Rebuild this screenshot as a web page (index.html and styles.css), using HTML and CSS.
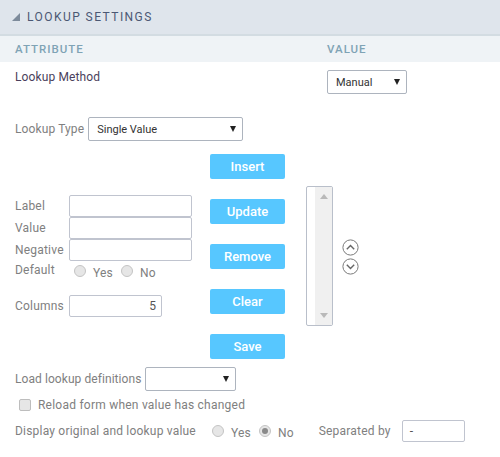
FILE: index.html
```html
<!DOCTYPE html>
<html lang="en">
<head>
<meta charset="utf-8">
<title>Lookup Settings</title>
<link rel="stylesheet" href="styles.css">
</head>
<body>
<header class="title-bar">
  <svg class="corner" width="8" height="8" viewBox="0 0 8 8"><path d="M8 0V8H0Z" fill="#7d8b9b"/></svg>
  <span class="title-text">LOOKUP SETTINGS</span>
</header>
<div class="head-row">
  <span class="head-attr">ATTRIBUTE</span>
  <span class="head-val">VALUE</span>
</div>
<div class="method-row">
  <span class="method-label">Lookup Method</span>
  <div class="select select-method"><span>Manual</span><i class="caret"></i></div>
</div>
<div class="type-row">
  <span class="label">Lookup Type</span>
  <div class="select select-type"><span>Single Value</span><i class="caret"></i></div>
</div>
<div class="editor">
  <div class="fields">
    <div class="field"><span class="label field-label">Label</span><div class="input"></div></div>
    <div class="field"><span class="label field-label">Value</span><div class="input"></div></div>
    <div class="field"><span class="label field-label">Negative</span><div class="input"></div></div>
    <div class="field default-row">
      <span class="label field-label default-label">Default</span>
      <span class="radio radio-first"></span><span class="label opt">Yes</span>
      <span class="radio radio-next"></span><span class="label opt">No</span>
    </div>
    <div class="field columns-row"><span class="label field-label">Columns</span><div class="input input-columns">5</div></div>
  </div>
  <div class="buttons">
    <div class="btn">Insert</div>
    <div class="btn">Update</div>
    <div class="btn">Remove</div>
    <div class="btn">Clear</div>
    <div class="btn">Save</div>
  </div>
  <div class="listbox">
    <div class="scrollbar">
      <svg width="8" height="5" viewBox="0 0 8 5"><path d="M4 0L8 5H0Z" fill="#b9b9b9"/></svg>
      <svg width="8" height="5" viewBox="0 0 8 5"><path d="M4 5L8 0H0Z" fill="#b9b9b9"/></svg>
    </div>
  </div>
  <div class="arrows">
    <svg width="17" height="17" viewBox="0 0 17 17"><circle cx="8.5" cy="8.5" r="7.6" fill="none" stroke="#7a7a7a" stroke-width="1"/><path d="M4.8 10.3L8.5 6.6L12.2 10.3" fill="none" stroke="#666" stroke-width="1.4"/></svg>
    <svg width="17" height="17" viewBox="0 0 17 17"><circle cx="8.5" cy="8.5" r="7.6" fill="none" stroke="#7a7a7a" stroke-width="1"/><path d="M4.8 6.7L8.5 10.4L12.2 6.7" fill="none" stroke="#666" stroke-width="1.4"/></svg>
  </div>
</div>
<div class="load-row">
  <span class="label load-label">Load lookup definitions</span>
  <div class="select select-load"><i class="caret"></i></div>
</div>
<div class="reload-row">
  <span class="checkbox"></span>
  <span class="label reload-label">Reload form when value has changed</span>
</div>
<div class="display-row">
  <span class="label">Display original and lookup value</span>
  <span class="radio radio-display"></span><span class="label opt">Yes</span>
  <span class="radio radio-display-next checked"></span><span class="label opt">No</span>
  <span class="label sep-label">Separated by</span>
  <div class="input input-sep">-</div>
</div>
</body>
</html>
```
FILE: styles.css
```css
* { box-sizing: border-box; }
html, body { margin: 0; padding: 0; }
body {
  width: 500px;
  height: 457px;
  overflow: hidden;
  background: #fff;
  font-family: Roboto, "Liberation Sans", sans-serif;
  font-size: 12px;
  color: #777;
}
.title-bar {
  height: 36px;
  background: #dfe5ec;
  border-bottom: 2px solid #d3dce2;
  display: flex;
  align-items: center;
  padding-left: 12px;
}
.title-text {
  margin-left: 7px;
  font-size: 12px;
  letter-spacing: 1.45px;
  color: #4b5874;
}
.head-row {
  height: 26px;
  background: #eff3f6;
  display: flex;
  align-items: center;
  padding-left: 15px;
  font-size: 11.5px;
  font-weight: 500;
  letter-spacing: 1px;
  color: #7fa3b5;
}
.head-attr { width: 312px; }
.method-row {
  height: 47px;
  display: flex;
  padding: 8px 0 0 15px;
}
.method-label {
  width: 312px;
  color: #4a3f5c;
  letter-spacing: 0.12px;
}
.select {
  position: relative;
  height: 24px;
  background: #fff;
  border: 1px solid #adb4be;
  border-radius: 2px;
  display: flex;
  align-items: center;
  padding-left: 8px;
  font-size: 11px;
  color: #333;
}
.caret {
  position: absolute;
  top: 8px;
  right: 6px;
  width: 0;
  height: 0;
  border-left: 3px solid transparent;
  border-right: 3px solid transparent;
  border-top: 6px solid #222;
}
.select-method { width: 80px; }
.select-type { width: 155px; margin-left: 4px; }
.select-load { width: 91px; margin-left: 4px; }
.type-row {
  height: 24px;
  margin-top: 8px;
  padding-left: 15px;
  display: flex;
  align-items: center;
}
.label { color: #808080; letter-spacing: 0.2px; }
.type-row .label { letter-spacing: 0.12px; }
.load-label { letter-spacing: 0.07px; }
.reload-label { letter-spacing: 0.23px; }
.editor {
  position: relative;
  display: flex;
  margin-top: 13px;
  height: 205px;
  padding-left: 15px;
}
.fields { width: 195px; padding-top: 41px; }
.field { display: flex; align-items: center; height: 22px; }
.field-label { width: 54px; }
.default-label { position: relative; top: -1px; }
.input {
  height: 22px;
  width: 123px;
  background: #fff;
  border: 1px solid #c0c4cf;
  border-radius: 2px;
}
.input-columns {
  width: 93px;
  text-align: right;
  padding-right: 5px;
  line-height: 20px;
  color: #555;
}
.default-row { height: 20px; }
.columns-row { margin-top: 14px; }
.radio {
  width: 12px;
  height: 12px;
  border-radius: 50%;
  border: 1px solid #c4c4c4;
  background: #e6e6e6;
  flex: none;
  position: relative;
}
.radio-first { margin-left: 5px; margin-right: 7px; }
.radio-next { margin-left: 8px; margin-right: 7px; }
.radio-display { margin-left: 16px; margin-right: 7px; }
.radio-display-next { margin-left: 8px; margin-right: 7px; }
.opt { position: relative; top: 2px; }
.checked::after {
  content: "";
  position: absolute;
  left: 2px;
  top: 2px;
  width: 6px;
  height: 6px;
  border-radius: 50%;
  background: #8a8a8a;
}
.buttons {
  display: flex;
  flex-direction: column;
  gap: 20px;
  width: 75px;
}
.btn {
  height: 25px;
  background: #57c7ff;
  border-radius: 2px;
  color: #fff;
  font-size: 13px;
  font-weight: 500;
  text-align: center;
  line-height: 25px;
}
.listbox {
  width: 27px;
  height: 140px;
  margin: 32px 0 0 21px;
  border: 1px solid #b9bfca;
  border-radius: 2px;
  padding-left: 8px;
  background: #fff;
}
.scrollbar {
  height: 100%;
  background: #f0f0f0;
  display: flex;
  flex-direction: column;
  justify-content: space-between;
  align-items: center;
  padding: 7px 0;
}
.arrows {
  display: flex;
  flex-direction: column;
  gap: 2px;
  margin: 85px 0 0 9px;
}
.arrows svg { display: block; }
.load-row {
  height: 24px;
  margin-top: 8px;
  padding-left: 15px;
  display: flex;
  align-items: center;
}
.reload-row {
  display: flex;
  align-items: center;
  height: 14px;
  margin-top: 7px;
  padding-left: 19px;
}
.checkbox {
  width: 12px;
  height: 12px;
  background: #e6e6e6;
  border: 1px solid #bdbdbd;
  border-radius: 2px;
  margin-right: 7px;
}
.display-row {
  display: flex;
  align-items: center;
  height: 22px;
  margin-top: 8px;
  padding-left: 15px;
}
.sep-label { margin-left: 25px; }
.input-sep {
  width: 63px;
  margin-left: 11px;
  padding-left: 7px;
  line-height: 20px;
  color: #555;
}
```
